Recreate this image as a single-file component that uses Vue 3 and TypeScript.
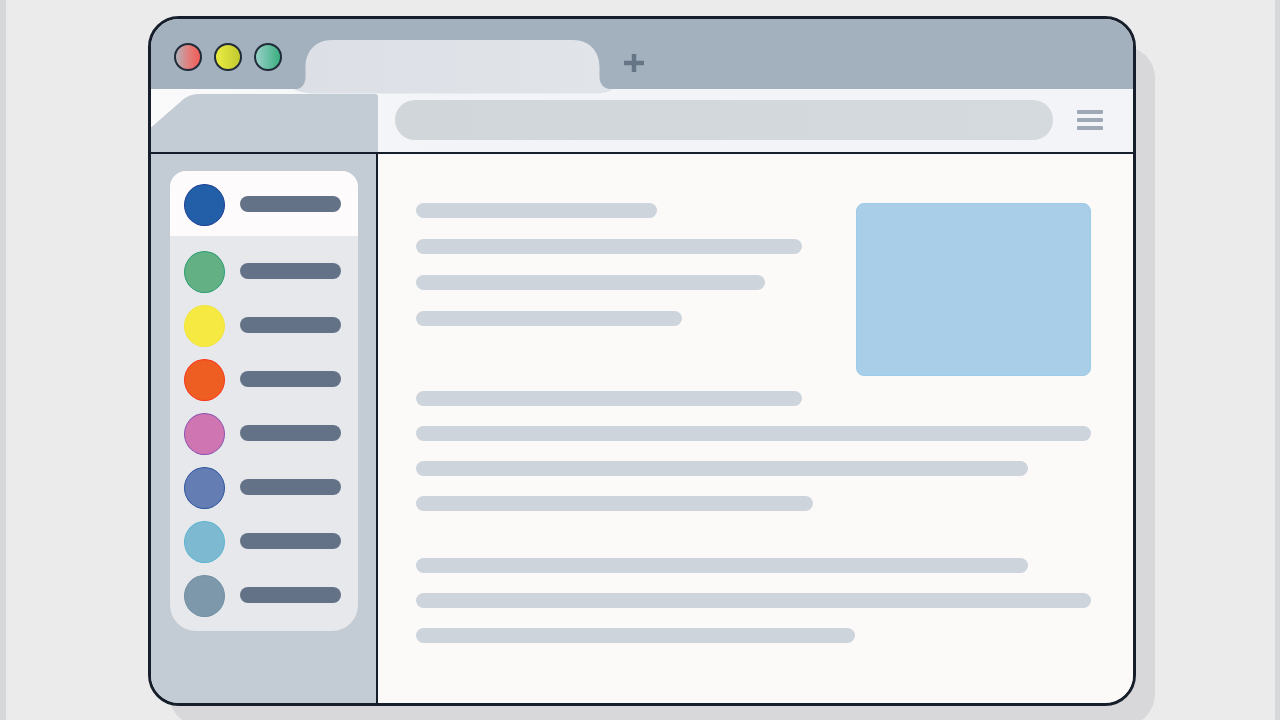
<script setup lang="ts">
import { ref } from 'vue'

interface Entry {
  name: string
  fill: string
  edge: string
}

const controls = [
  { name: 'Close', tone: 'red' },
  { name: 'Minimize', tone: 'yellow' },
  { name: 'Maximize', tone: 'green' },
]

const entries: Entry[] = [
  { name: 'Blue', fill: '#235fa9', edge: '#1c3f93' },
  { name: 'Green', fill: '#62b083', edge: '#2f9e72' },
  { name: 'Yellow', fill: '#f5e942', edge: '#f2e53c' },
  { name: 'Orange', fill: '#ee5d22', edge: '#f8371a' },
  { name: 'Pink', fill: '#cf75b1', edge: '#8c52ae' },
  { name: 'Indigo', fill: '#647eb3', edge: '#2f559f' },
  { name: 'Sky', fill: '#7dbad2', edge: '#5cb4cf' },
  { name: 'Slate', fill: '#7d98ab', edge: '#708fa3' },
]

const intro = [62.5, 100, 90.5, 69]
const sections = [
  [57.2, 100, 90.6, 58.8],
  [90.6, 100, 65],
]

const active = ref(0)
const address = ref('')
</script>

<template>
  <div class="page">
    <div class="stage">
      <div class="window">
        <header class="titlebar">
          <div class="controls">
            <button
              v-for="c in controls"
              :key="c.name"
              type="button"
              class="control"
              :class="c.tone"
              :aria-label="c.name"
            ></button>
          </div>
          <svg class="tab" viewBox="0 0 324 55" aria-hidden="true">
            <defs>
              <linearGradient id="tab-fill" x1="0" x2="1" y1="0" y2="0">
                <stop offset="0" stop-color="#dce0e6" />
                <stop offset="1" stop-color="#e1e5ea" />
              </linearGradient>
            </defs>
            <path
              fill="url(#tab-fill)"
              d="M3 50.500C11 50.500 15.500 46 15.500 38V28C15.500 12 26 1 42 1H283C299 1 309.500 12 309.500 28V38C309.500 45 314 50.500 323 50.500Q316 54.500 306 54.500H20Q10 53 3 50.500Z"
            />
          </svg>
          <button type="button" class="new-tab" aria-label="New tab">
            <svg viewBox="0 0 20 18" aria-hidden="true">
              <path d="M0 9H20M10 0V18" stroke="#667586" stroke-width="4.500" />
            </svg>
          </button>
        </header>

        <div class="toolbar">
          <svg class="corner" viewBox="0 0 227 58" preserveAspectRatio="none" aria-hidden="true">
            <path d="M0 33.500L31 6.500Q38 0 47 0H224Q227 0 227 3V58H0Z" fill="#c3cbd4" />
          </svg>
          <input v-model="address" class="address" type="text" aria-label="Address" />
          <button type="button" class="menu" aria-label="Menu">
            <span></span><span></span><span></span>
          </button>
        </div>

        <div class="body">
          <nav class="sidebar">
            <ul class="card">
              <li v-for="(e, i) in entries" :key="e.name">
                <button
                  type="button"
                  class="entry"
                  :class="{ active: i === active }"
                  :aria-label="e.name"
                  @click="active = i"
                >
                  <span class="dot" :style="{ background: e.fill, borderColor: e.edge }"></span>
                  <span class="label"></span>
                </button>
              </li>
            </ul>
          </nav>

          <main class="content">
            <section class="lead">
              <div class="lines roomy">
                <div v-for="(w, i) in intro" :key="i" class="line" :style="{ width: w + '%' }"></div>
              </div>
              <div class="picture"></div>
            </section>
            <section v-for="(s, n) in sections" :key="n" class="lines">
              <div v-for="(w, i) in s" :key="i" class="line" :style="{ width: w + '%' }"></div>
            </section>
          </main>
        </div>
      </div>
    </div>
  </div>
</template>

<style>
body {
  margin: 0;
  background: #ebebeb;
}
</style>

<style scoped>
* {
  box-sizing: border-box;
}

button {
  padding: 0;
  border: 0;
  background: none;
  cursor: pointer;
}

.page {
  display: flex;
  height: 100vh;
  min-height: 700px;
  padding: 16px 139px 14px 142px;
  overflow: hidden;
  background: #ebebeb;
  border-left: 6px solid #d6d7d9;
  border-right: 5px solid #d6d7d9;
  font-family: "Liberation Sans", Arial, sans-serif;
}

.stage {
  position: relative;
  display: flex;
  flex: 1;
}

.stage::before {
  content: "";
  position: absolute;
  inset: 30px -19px -20px 21px;
  border-radius: 32px;
  background: #d8d8da;
}

.window {
  position: relative;
  display: flex;
  flex: 1;
  flex-direction: column;
  border: 3px solid #171e2b;
  border-radius: 31px;
  background: #f2f4f7;
}

.titlebar {
  display: flex;
  flex: none;
  align-items: flex-end;
  height: 70px;
  border-radius: 28px 28px 0 0;
  background: #a3b0be;
}

.controls {
  display: flex;
  gap: 12px;
  margin: 0 8px 18px 23px;
}

.control {
  width: 28px;
  height: 28px;
  border: 2px solid #202a38;
  border-radius: 50%;
  background-origin: border-box;
}

.red {
  background-image: linear-gradient(90deg, #b5aeb5 10%, #e0817f 50%, #ef5e5a 90%);
}

.yellow {
  background-image: linear-gradient(90deg, #e5e73f 20%, #c3ca30 90%);
}

.green {
  background-image: linear-gradient(90deg, #90cdc1 15%, #3eb082 90%);
}

.tab {
  position: relative;
  flex: none;
  width: 324px;
  height: 55px;
  margin-bottom: -5px;
}

.new-tab {
  width: 20px;
  height: 18px;
  margin: 0 0 17px 10px;
}

.new-tab svg {
  display: block;
  width: 20px;
  height: 18px;
}

.toolbar {
  display: flex;
  flex: none;
  align-items: center;
  height: 65px;
  padding-right: 30px;
  border-bottom: 2px solid #171e2b;
  background: linear-gradient(90deg, #fafafb, #f2f4f7 30%);
}

.corner {
  flex: none;
  align-self: flex-end;
  width: 227px;
  height: 58px;
}

.address {
  flex: 1;
  min-width: 0;
  height: 40px;
  margin: 0 24px 1px 17px;
  padding: 0 20px;
  border: 0;
  border-radius: 20px;
  outline: 0;
  background: linear-gradient(90deg, #d1d6db, #d5dadf);
  color: #4b5766;
  font: 16px "Liberation Sans", Arial, sans-serif;
}

.menu {
  display: flex;
  flex-direction: column;
  gap: 4px;
  width: 26px;
  margin-bottom: 1px;
}

.menu span {
  height: 4px;
  border-radius: 1px;
  background: #9fa9b5;
}

.body {
  display: flex;
  flex: 1;
  min-height: 0;
}

.sidebar {
  flex: none;
  width: 227px;
  padding: 17px 18px 0 19px;
  border-right: 2px solid #171e2b;
  border-bottom-left-radius: 28px;
  background: #c3ccd5;
}

.card {
  margin: 0;
  padding: 0 0 8px;
  overflow: hidden;
  border-radius: 16px 16px 26px 26px;
  background: #e6e8ec;
  list-style: none;
}

.entry {
  display: flex;
  align-items: center;
  width: 100%;
  height: 54px;
  padding-left: 14px;
}

.card li:first-child {
  margin-bottom: 9px;
}

.card li:first-child .entry {
  height: 65px;
  padding-top: 2px;
}

.entry.active {
  background: #fdfbfb;
}

.dot {
  flex: none;
  width: 41px;
  height: 42px;
  border: 1px solid;
  border-radius: 50%;
}

.label {
  width: 101px;
  height: 16px;
  margin: 0 0 2px 15px;
  border-radius: 8px;
  background: #647287;
}

.content {
  display: flex;
  flex: 1;
  flex-direction: column;
  min-width: 0;
  padding: 49px 42px 0 38px;
  border-bottom-right-radius: 28px;
  background: #fbfaf9;
}

.lead {
  display: flex;
  gap: 54px;
  margin-bottom: 15px;
}

.lines {
  display: flex;
  flex-direction: column;
  gap: 20px;
  margin-bottom: 47px;
}

.roomy {
  flex: 1;
  gap: 21px;
  margin: 0;
}

.line {
  height: 15px;
  border-radius: 8px;
  background: #ced4dc;
}

.picture {
  width: 235px;
  height: 173px;
  border: 1px solid #9dcbe9;
  border-radius: 8px;
  background: #a8cee8;
}
</style>
